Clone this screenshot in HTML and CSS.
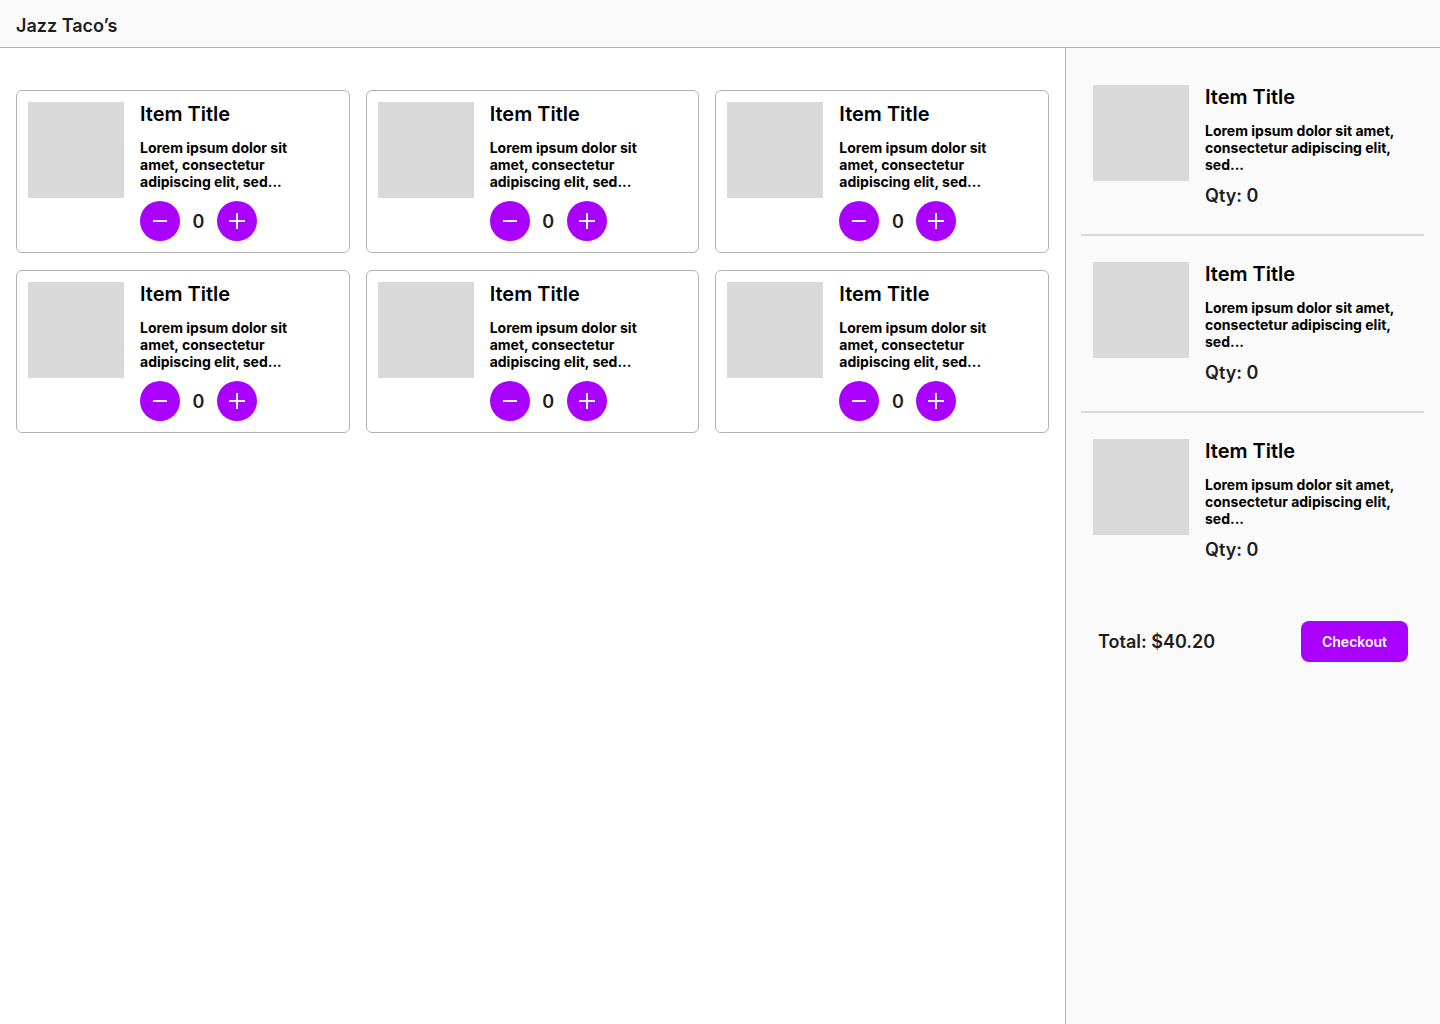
FILE: index.html
```html
<!DOCTYPE html>
<html lang="en">
<head>
  <meta charset="UTF-8">
  <meta name="viewport" content="width=device-width, initial-scale=1.0">
  <title>Jazz Taco’s</title>
  <link rel="stylesheet" href="styles.css">
</head>
<body>

  <!-- Top Bar -->
  <header class="top-bar">
    <span class="brand">Jazz Taco’s</span>
  </header>

  <div class="layout">
    <!-- Menu Items -->
    <main class="menu">
      <div class="grid">
        <div class="card">
          <div class="thumb"></div>
          <div class="card-body">
            <h2 class="item-title">Item Title</h2>
            <p class="item-desc">Lorem ipsum dolor sit amet, consectetur adipiscing elit, sed...</p>
            <div class="stepper">
              <button class="round-btn" aria-label="Remove">
                <svg width="18" height="18" viewBox="0 0 18 18"><path d="M2 9h14" stroke="#fff" stroke-width="2"/></svg>
              </button>
              <span class="count">0</span>
              <button class="round-btn" aria-label="Add">
                <svg width="18" height="18" viewBox="0 0 18 18"><path d="M1 9h16M9 1v16" stroke="#fff" stroke-width="2"/></svg>
              </button>
            </div>
          </div>
        </div>

        <div class="card">
          <div class="thumb"></div>
          <div class="card-body">
            <h2 class="item-title">Item Title</h2>
            <p class="item-desc">Lorem ipsum dolor sit amet, consectetur adipiscing elit, sed...</p>
            <div class="stepper">
              <button class="round-btn" aria-label="Remove">
                <svg width="18" height="18" viewBox="0 0 18 18"><path d="M2 9h14" stroke="#fff" stroke-width="2"/></svg>
              </button>
              <span class="count">0</span>
              <button class="round-btn" aria-label="Add">
                <svg width="18" height="18" viewBox="0 0 18 18"><path d="M1 9h16M9 1v16" stroke="#fff" stroke-width="2"/></svg>
              </button>
            </div>
          </div>
        </div>

        <div class="card">
          <div class="thumb"></div>
          <div class="card-body">
            <h2 class="item-title">Item Title</h2>
            <p class="item-desc">Lorem ipsum dolor sit amet, consectetur adipiscing elit, sed...</p>
            <div class="stepper">
              <button class="round-btn" aria-label="Remove">
                <svg width="18" height="18" viewBox="0 0 18 18"><path d="M2 9h14" stroke="#fff" stroke-width="2"/></svg>
              </button>
              <span class="count">0</span>
              <button class="round-btn" aria-label="Add">
                <svg width="18" height="18" viewBox="0 0 18 18"><path d="M1 9h16M9 1v16" stroke="#fff" stroke-width="2"/></svg>
              </button>
            </div>
          </div>
        </div>

        <div class="card">
          <div class="thumb"></div>
          <div class="card-body">
            <h2 class="item-title">Item Title</h2>
            <p class="item-desc">Lorem ipsum dolor sit amet, consectetur adipiscing elit, sed...</p>
            <div class="stepper">
              <button class="round-btn" aria-label="Remove">
                <svg width="18" height="18" viewBox="0 0 18 18"><path d="M2 9h14" stroke="#fff" stroke-width="2"/></svg>
              </button>
              <span class="count">0</span>
              <button class="round-btn" aria-label="Add">
                <svg width="18" height="18" viewBox="0 0 18 18"><path d="M1 9h16M9 1v16" stroke="#fff" stroke-width="2"/></svg>
              </button>
            </div>
          </div>
        </div>

        <div class="card">
          <div class="thumb"></div>
          <div class="card-body">
            <h2 class="item-title">Item Title</h2>
            <p class="item-desc">Lorem ipsum dolor sit amet, consectetur adipiscing elit, sed...</p>
            <div class="stepper">
              <button class="round-btn" aria-label="Remove">
                <svg width="18" height="18" viewBox="0 0 18 18"><path d="M2 9h14" stroke="#fff" stroke-width="2"/></svg>
              </button>
              <span class="count">0</span>
              <button class="round-btn" aria-label="Add">
                <svg width="18" height="18" viewBox="0 0 18 18"><path d="M1 9h16M9 1v16" stroke="#fff" stroke-width="2"/></svg>
              </button>
            </div>
          </div>
        </div>

        <div class="card">
          <div class="thumb"></div>
          <div class="card-body">
            <h2 class="item-title">Item Title</h2>
            <p class="item-desc">Lorem ipsum dolor sit amet, consectetur adipiscing elit, sed...</p>
            <div class="stepper">
              <button class="round-btn" aria-label="Remove">
                <svg width="18" height="18" viewBox="0 0 18 18"><path d="M2 9h14" stroke="#fff" stroke-width="2"/></svg>
              </button>
              <span class="count">0</span>
              <button class="round-btn" aria-label="Add">
                <svg width="18" height="18" viewBox="0 0 18 18"><path d="M1 9h16M9 1v16" stroke="#fff" stroke-width="2"/></svg>
              </button>
            </div>
          </div>
        </div>
      </div>
    </main>

    <!-- Cart Sidebar -->
    <aside class="cart">
      <div class="cart-item">
        <div class="thumb"></div>
        <div class="cart-body">
          <h2 class="item-title">Item Title</h2>
          <p class="item-desc">Lorem ipsum dolor sit amet, consectetur adipiscing elit, sed...</p>
          <span class="qty">Qty: 0</span>
        </div>
      </div>
      <hr class="divider">
      <div class="cart-item">
        <div class="thumb"></div>
        <div class="cart-body">
          <h2 class="item-title">Item Title</h2>
          <p class="item-desc">Lorem ipsum dolor sit amet, consectetur adipiscing elit, sed...</p>
          <span class="qty">Qty: 0</span>
        </div>
      </div>
      <hr class="divider">
      <div class="cart-item">
        <div class="thumb"></div>
        <div class="cart-body">
          <h2 class="item-title">Item Title</h2>
          <p class="item-desc">Lorem ipsum dolor sit amet, consectetur adipiscing elit, sed...</p>
          <span class="qty">Qty: 0</span>
        </div>
      </div>

      <div class="total-row">
        <span class="total">Total: $40.20</span>
        <button class="checkout">Checkout</button>
      </div>
    </aside>
  </div>

</body>
</html>
```

FILE: styles.css
```css
    body {
      font-family: Inter, "Noto Sans", sans-serif;
      margin: 0;
      background-color: #fff;
      color: #000;
      min-height: 100vh;
    }

    /* Top Bar */
    .top-bar {
      box-sizing: border-box;
      height: 48px;
      display: flex;
      align-items: center;
      padding: 3px 16px 0;
      background-color: #fafafa;
      border-bottom: 1px solid #b3b3b3;
    }

    .brand {
      font-size: 18px;
      font-weight: 600;
      color: #1e1e1e;
    }

    .layout {
      display: flex;
      min-height: 976px;
    }

    /* Menu grid */
    .menu {
      width: 1065px;
      box-sizing: border-box;
      padding: 42px 16px 16px;
    }

    .grid {
      display: grid;
      grid-template-columns: repeat(3, 1fr);
      gap: 17px 16px;
    }

    .card {
      display: flex;
      gap: 16px;
      padding: 11px;
      border: 1px solid #b3b3b3;
      border-radius: 6px;
    }

    .thumb {
      width: 96px;
      height: 96px;
      flex-shrink: 0;
      background-color: #d9d9d9;
    }

    .card-body,
    .cart-body {
      display: flex;
      flex-direction: column;
      align-items: flex-start;
    }

    .item-title {
      margin: 0;
      font-size: 20px;
      line-height: 24px;
      font-weight: 600;
    }

    .item-desc {
      margin: 13px 0 0;
      font-size: 14px;
      line-height: 17px;
      font-weight: 700;
    }

    .card .item-desc {
      width: 178px;
    }

    .stepper {
      display: flex;
      align-items: center;
      gap: 12px;
      margin-top: 11px;
    }

    .round-btn {
      width: 40px;
      height: 40px;
      padding: 0;
      border: none;
      border-radius: 50%;
      background-color: #aa00ff;
      display: flex;
      align-items: center;
      justify-content: center;
      cursor: pointer;
    }

    .count {
      font-size: 18px;
      font-weight: 600;
      color: #1e1e1e;
      min-width: 13px;
      text-align: center;
    }

    /* Cart sidebar */
    .cart {
      flex: 1;
      background-color: #fafafa;
      border-left: 1px solid #b3b3b3;
      padding: 25px 16px 16px 15px;
      display: flex;
      flex-direction: column;
    }

    .cart-item {
      display: flex;
      gap: 16px;
      padding: 12px;
    }

    .qty {
      margin-top: 12px;
      font-size: 18px;
      line-height: 22px;
      font-weight: 600;
      color: #1e1e1e;
    }

    .divider {
      border: none;
      height: 2px;
      background-color: #d9d9d9;
      margin: 15px 0 14px;
    }

    .total-row {
      display: flex;
      justify-content: space-between;
      align-items: center;
      padding: 0 16px 0 17px;
      margin-top: 48px;
    }

    .total {
      font-size: 18px;
      font-weight: 600;
      color: #1e1e1e;
    }

    .checkout {
      width: 107px;
      height: 41px;
      border: none;
      border-radius: 8px;
      background-color: #aa00ff;
      color: #fff;
      font-family: inherit;
      font-size: 14px;
      font-weight: 600;
      cursor: pointer;
    }
```
